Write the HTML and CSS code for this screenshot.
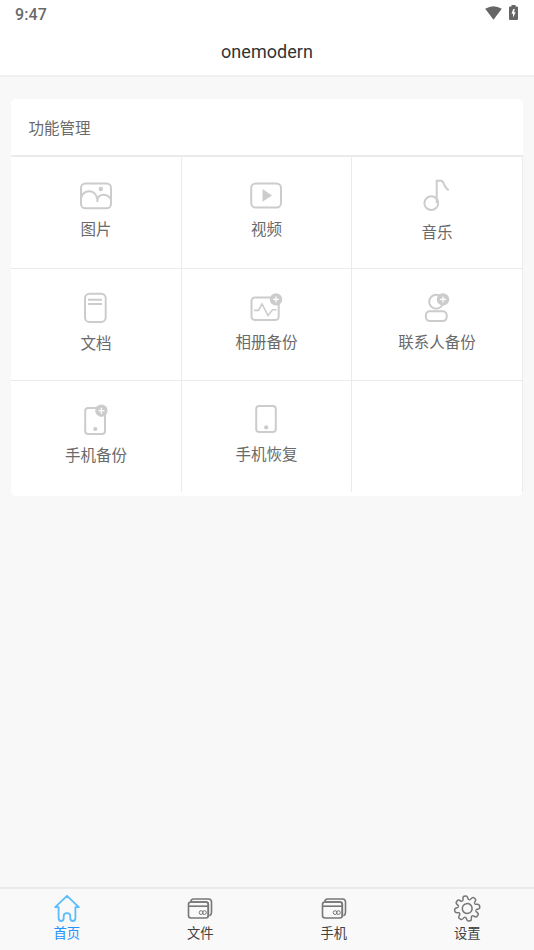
FILE: index.html
```html
<!DOCTYPE html>
<html lang="zh-CN">
<head>
<meta charset="utf-8">
<meta name="viewport" content="width=device-width, initial-scale=1">
<title>onemodern</title>
<link rel="stylesheet" href="styles.css">
</head>
<body>
<svg class="defs" aria-hidden="true">
  <defs>
    <g id="badge"><circle r="6.2" fill="#ccc" stroke="none"/><path d="M-3 0H3M0-3V3" stroke="#fff" stroke-width="1.3"/></g>
    <g id="cards">
      <path d="M4.5 7.5 5.4 6Q6.2 5 7.5 5H22.5Q25.5 5 25.5 8V18.5Q25.5 21 23.5 21.8M5 8H20Q22.3 8 22.3 10.3V22.5"/>
      <rect x="2.5" y="8" width="19.8" height="16" rx="2.5"/>
      <path d="M2.5 12.2H22.3"/>
      <g stroke-width="1"><circle cx="15.1" cy="18.6" r="1.9"/><circle cx="18.4" cy="18.6" r="1.9"/></g>
    </g>
    <path id="tooth" d="M-3.56-8.6C-2.8-8.3-2.6-9-2.5-10-2.3-11.7-2-12.6-1-12.6H1C2-12.6 2.3-11.7 2.5-10 2.6-9 2.8-8.3 3.56-8.6"/>
  </defs>
</svg>
<div class="app">
  <header class="top">
    <div class="status">
      <span class="time">9:47</span>
      <span class="status-icons">
        <svg width="17" height="14" viewBox="0 0 17 14"><path d="M.2 2.8Q8.5-2.5 16.8 2.8L8.5 13.8Z"/></svg>
        <svg width="9" height="15" viewBox="0 0 9 15"><path fill-rule="evenodd" d="M2.5 0H6.5V1.5H8Q9 1.5 9 2.5V14Q9 15 8 15H1Q0 15 0 14V2.5Q0 1.5 1 1.5H2.5ZM4.2 4 2.5 8.8H4V12.5L6.7 7.3H5.1L5.8 4Z"/></svg>
      </span>
    </div>
    <h1 class="title">onemodern</h1>
  </header>

  <main class="content">
    <section class="card">
      <h2 class="card-title">功能管理</h2>
      <div class="grid">
        <a class="cell">
          <svg class="icon" viewBox="0 0 40 40"><rect x="5" y="6.5" width="30" height="24.8" rx="4.5"/><path d="M5 21.5C6.2 12 20 11.5 21.4 22.5V25M21.4 22.5C23 16.5 31 16 35 22.5"/><circle class="solid" cx="24.8" cy="12" r="2.2"/></svg>
          <span class="label">图片</span>
        </a>
        <a class="cell">
          <svg class="icon" viewBox="0 0 40 40"><rect x="5.2" y="6.5" width="29.8" height="24" rx="4.5"/><path class="solid" d="M16.5 12 26 18.4 16.5 24.8Z"/></svg>
          <span class="label">视频</span>
        </a>
        <a class="cell">
          <svg class="icon" viewBox="0 0 40 40"><circle cx="14.3" cy="26.2" r="6.9"/><path d="M19.7 26V3.7H24.2C27.2 3.7 26.8 11.6 31.8 13"/></svg>
          <span class="label drop-3">音乐</span>
        </a>
        <a class="cell">
          <svg class="icon" viewBox="0 0 40 40"><rect x="9" y="4.7" width="20.7" height="28.2" rx="4.5"/><path d="M12 10.8H26M12 15H26"/></svg>
          <span class="label drop-2">文档</span>
        </a>
        <a class="cell">
          <svg class="icon" viewBox="0 0 40 40"><rect x="5.5" y="8.4" width="27.2" height="22.6" rx="3.5"/><path stroke-width="1.6" d="M8 21.4H12.5L16 15 22 26.5 26.5 20.8H30.5"/><use href="#badge" x="30" y="10.4"/></svg>
          <span class="label drop-1">相册备份</span>
        </a>
        <a class="cell">
          <svg class="icon" viewBox="0 0 40 40"><circle cx="19.2" cy="12.7" r="7"/><rect x="8.9" y="22.3" width="20.8" height="9.8" rx="4"/><use href="#badge" x="26" y="10.4"/></svg>
          <span class="label drop-1">联系人备份</span>
        </a>
        <a class="cell">
          <svg class="icon" viewBox="0 0 40 40"><rect x="9.2" y="7" width="19.8" height="26" rx="3"/><circle class="solid" cx="19.3" cy="28" r="2.1"/><use href="#badge" x="25.4" y="9.7"/></svg>
          <span class="label drop-2">手机备份</span>
        </a>
        <a class="cell">
          <svg class="icon" viewBox="0 0 40 40"><rect x="10.2" y="5" width="19.6" height="26" rx="3"/><circle class="solid" cx="20.2" cy="26.4" r="2.1"/></svg>
          <span class="label drop-1">手机恢复</span>
        </a>
        <div class="cell"></div>
      </div>
    </section>
  </main>

  <nav class="tabs">
    <a class="tab active">
      <svg class="tab-icon" viewBox="0 0 28 28"><path d="M14 1.8 2.2 13.2H5.6V24Q5.6 27 8.2 27 10.7 27 10.7 24V22Q10.7 19.2 14 19.2T17.3 22V24Q17.3 27 19.8 27 22.4 27 22.4 24V13.2H25.8Z"/></svg>
      <span>首页</span>
    </a>
    <a class="tab">
      <svg class="tab-icon" viewBox="0 0 28 28"><use href="#cards"/></svg>
      <span>文件</span>
    </a>
    <a class="tab">
      <svg class="tab-icon" viewBox="0 0 28 28"><use href="#cards"/></svg>
      <span>手机</span>
    </a>
    <a class="tab">
      <svg class="tab-icon" viewBox="0 0 28 28"><g class="gear" transform="translate(14.2 14.5) rotate(-10)"><circle r="4.9"/><use href="#tooth"/><use href="#tooth" transform="rotate(45)"/><use href="#tooth" transform="rotate(90)"/><use href="#tooth" transform="rotate(135)"/><use href="#tooth" transform="rotate(180)"/><use href="#tooth" transform="rotate(225)"/><use href="#tooth" transform="rotate(270)"/><use href="#tooth" transform="rotate(315)"/></g></svg>
      <span>设置</span>
    </a>
  </nav>
</div>
</body>
</html>
```
FILE: styles.css
```css
* { box-sizing: border-box; }
body {
  margin: 0;
  background: #f8f8f8;
  color: #6a6a6a;
  font-family: Roboto, "Noto Sans CJK SC", sans-serif;
}
.defs { display: none; }
.app { height: 950px; display: flex; flex-direction: column; }

.top {
  height: 77px;
  background: #fff;
  border-bottom: 2px solid #efefef;
}
.status {
  height: 28px;
  padding: 0 16px 0 15px;
  display: flex;
  justify-content: space-between;
}
.time { font-size: 16px; font-weight: 500; line-height: 29px; letter-spacing: .1px; }
.status-icons { display: flex; gap: 7px; padding-top: 5px; fill: #666; }
.status-icons svg:first-child { margin-top: 1px; }
.title {
  margin: 0;
  font-size: 18px;
  font-weight: 400;
  line-height: 48px;
  text-align: center;
  letter-spacing: .05px;
  color: #333;
}

.content { flex: 1; padding: 22px 11px 0; }
.card { height: 397px; background: #fff; border-radius: 5px; }
.card-title {
  margin: 0;
  height: 58px;
  padding-left: 17.5px;
  font-size: 15.5px;
  font-weight: 400;
  line-height: 60px;
  border-bottom: 2px solid #ebebeb;
}
.grid {
  display: grid;
  grid-template-columns: 171px 170px 171px;
  grid-template-rows: 112px 112px 111px;
}
.cell {
  display: flex;
  flex-direction: column;
  align-items: center;
  padding-top: 20px;
  border-right: 1px solid #ebebeb;
  border-bottom: 1px solid #ebebeb;
}
.cell:nth-child(n+7) { border-bottom: 0; }
.icon {
  width: 40px;
  height: 40px;
  flex: none;
  margin-right: 1px;
  fill: none;
  stroke: #ccc;
  stroke-width: 2;
}
.solid { fill: #ccc; stroke: none; }
.label { font-size: 15.5px; line-height: 26px; white-space: nowrap; }
.drop-1 { margin-top: 1px; }
.drop-2 { margin-top: 2px; }
.drop-3 { margin-top: 3px; }

.tabs {
  height: 63px;
  display: grid;
  grid-template-columns: repeat(4, 1fr);
  background: #f9f9f9;
  border-top: 2px solid #ebebeb;
}
.tab {
  display: flex;
  flex-direction: column;
  align-items: center;
  padding-top: 5px;
  font-size: 13.3px;
  line-height: 24px;
  color: #404040;
}
.tab-icon { width: 28px; height: 28px; fill: none; stroke: #777; stroke-width: 1.6; }
.gear { stroke-width: 1.5; }
.active { color: #2492fa; }
.active .tab-icon { stroke: #5bbcfc; stroke-width: 1.8; stroke-linejoin: round; }
```
